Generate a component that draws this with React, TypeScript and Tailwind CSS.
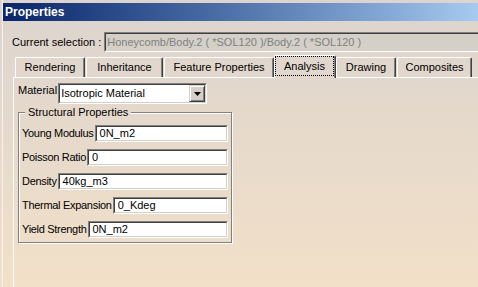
import React from "react";

function Sunken({ className, innerClassName, children }: { className?: string; innerClassName?: string; children?: React.ReactNode }) {
  return (
    <div className={"border border-t-[#808080] border-l-[#808080] border-r-white border-b-white " + (className ?? "")}>
      <div className={"h-full border border-t-[#404040] border-l-[#404040] border-r-[#d4d0c8] border-b-[#d4d0c8] " + (innerClassName ?? "")}>
        {children}
      </div>
    </div>
  );
}

function Tab({ className, children }: { className: string; children: React.ReactNode }) {
  return (
    <div
      className={
        "h-[20px] flex items-center justify-center rounded-tl-[2px] rounded-tr-[2px] border-t border-l border-r border-t-white border-l-white border-r-[#404040] shadow-[inset_-1px_0_0_#808080] whitespace-nowrap " +
        className
      }
    >
      {children}
    </div>
  );
}

const rows: [string, string][] = [
  ["Young Modulus", "0N_m2"],
  ["Poisson Ratio", "0"],
  ["Density", "40kg_m3"],
  ["Thermal Expansion", "0_Kdeg"],
  ["Yield Strength", "0N_m2"],
];

export default function App() {
  return (
    <div className="w-[478px] h-[287px] overflow-hidden bg-linear-to-b from-[#dcd4ce] to-[#f2e0c8] font-['Liberation_Sans',Arial,sans-serif] text-[11px] text-black">
      <div className="ml-[2px] h-full border-l border-l-[#f6f2ee] pt-[3px] flex flex-col">
        {/* Title bar */}
        <div className="h-[18px] flex items-center pl-[2px] bg-linear-to-r from-[#0a246a] to-[#a6caf0] text-white font-bold text-[12px] leading-none">
          Properties
        </div>

        {/* Current selection */}
        <div className="mt-[11px] pl-[9px] flex items-center">
          <span className="whitespace-nowrap leading-[13px]">Current selection :</span>
          <Sunken
            className="ml-[3px] flex-1 h-[20px] -mr-[10px]"
            innerClassName="bg-[#d4d0c8] text-[#808080] pl-[1px] leading-[16px] whitespace-nowrap overflow-hidden"
          >
            Honeycomb/Body.2 ( *SOL120 )/Body.2 ( *SOL120 )
          </Sunken>
        </div>

        {/* Tabs */}
        <div className="mt-[3px] ml-[12px] h-[22px] flex items-end gap-[1px] relative z-10">
          <Tab className="w-[70px]">Rendering</Tab>
          <Tab className="w-[77px]">Inheritance</Tab>
          <Tab className="w-[110px]">Feature Properties</Tab>
          <div className="-ml-[1px] -mr-[1px] -mb-[1px] w-[62px] h-[23px] rounded-tl-[2px] rounded-tr-[2px] border-t border-l border-r border-t-white border-l-white border-r-[#404040] shadow-[inset_-1px_0_0_#808080] bg-[#e1d7cd] pr-[1px] pb-[2px]">
            <div className="h-full flex items-center justify-center border border-dotted border-black whitespace-nowrap">
              Analysis
            </div>
          </div>
          <Tab className="w-[60px]">Drawing</Tab>
          <Tab className="w-[75px]">Composites</Tab>
        </div>

        {/* Panel */}
        <div className="ml-[10px] flex-1 border-t border-l border-t-white border-l-white pl-[4px] pt-[5px] flex flex-col">
          <div className="flex items-start">
            <span className="mt-[1px] leading-[13px] whitespace-nowrap">Material</span>
            <Sunken className="ml-[1px] w-[149px] h-[21px]" innerClassName="bg-white flex">
              <span className="flex-1 pl-[1px] leading-[17px] whitespace-nowrap">Isotropic Material</span>
              <div className="w-[16px] h-full bg-[#d4d0c8] border border-t-[#d4d0c8] border-l-[#d4d0c8] border-r-[#404040] border-b-[#404040] shadow-[inset_1px_1px_0_white,inset_-1px_-1px_0_#808080] flex items-center justify-center">
                <svg width="7" height="4" viewBox="0 0 7 4">
                  <path d="M0 0H7L3.5 4Z" fill="black" />
                </svg>
              </div>
            </Sunken>
          </div>

          <fieldset className="mt-[2px] w-[214px] border border-[#808080] shadow-[inset_1px_1px_0_white,1px_1px_0_white] pl-[3px] pr-[3px] pb-[4px]">
            <legend className="ml-[3px] px-[3px] bg-[#e5d9cc] leading-[13px]">Structural Properties</legend>
            <div className="pt-[6px] flex flex-col gap-[7px]">
              {rows.map(([label, value]) => (
                <div key={label} className="flex items-center h-[17px]">
                  <span className="whitespace-nowrap leading-[13px] tracking-[-0.3px]">{label}</span>
                  <Sunken className="ml-[1px] flex-1 h-[17px]" innerClassName="bg-white pl-[3px] leading-[13px] whitespace-nowrap">
                    {value}
                  </Sunken>
                </div>
              ))}
            </div>
          </fieldset>
        </div>
      </div>
    </div>
  );
}
